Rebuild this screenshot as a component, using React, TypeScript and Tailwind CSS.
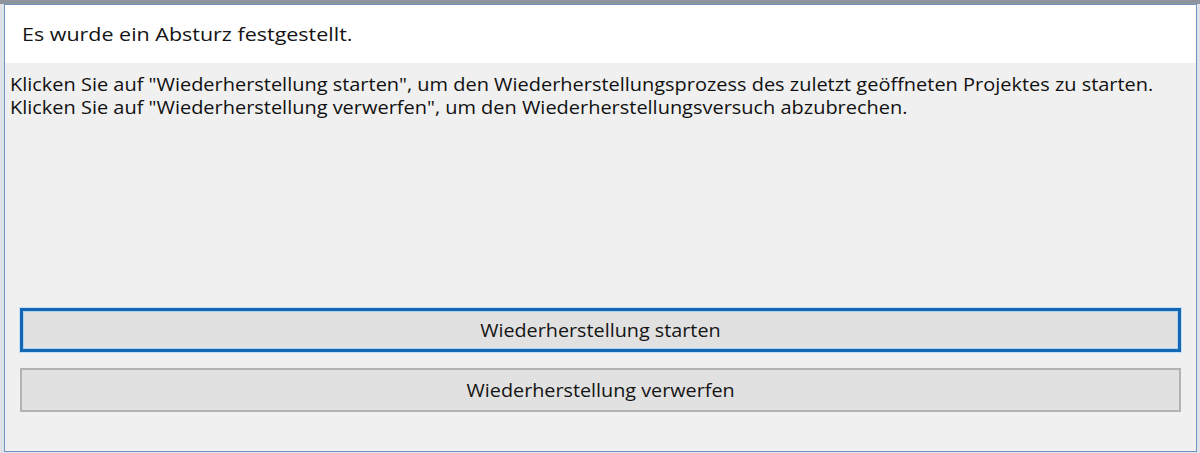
import React from "react";

export default function App() {
  const font = { fontFamily: '"Open Sans", "Noto Sans", sans-serif' };
  return (
    <div className="w-[1200px] h-[453px] bg-[#dfe3e8] flex flex-col overflow-hidden" style={font}>
      <div className="h-[4px] bg-[#8e949c] shrink-0" />
      <div className="flex-1 flex pl-[4px] pr-[3px] pb-[1px] bg-[#dfe3e8]">
        <div className="flex-1 flex flex-col border border-[#6f93c2] bg-[#f0f0f0]">
          <div className="h-[58px] bg-white flex items-center pl-[17px] pt-[1px] shrink-0">
            <span className="inline-block origin-left scale-x-[1.13] text-[19px] text-[#141414] whitespace-nowrap">
              Es wurde ein Absturz festgestellt.
            </span>
          </div>
          <div className="flex-1 flex flex-col">
            <div className="pl-[5px] pt-[10px] text-[17.5px] leading-[23px] text-[#101010] whitespace-nowrap">
              <div className="origin-left scale-x-[1.14]">
                Klicken Sie auf "Wiederherstellung starten", um den Wiederherstellungsprozess des zuletzt geöffneten Projektes zu starten.
              </div>
              <div className="origin-left scale-x-[1.14]">
                Klicken Sie auf "Wiederherstellung verwerfen", um den Wiederherstellungsversuch abzubrechen.
              </div>
            </div>
            <div className="flex-1" />
            <div className="flex flex-col gap-[16px] pl-[15px] pr-[15px] pb-[39px]">
              <div className="h-[44px] flex items-center justify-center bg-[#e1e1e1] border-[3px] border-[#1466b0] shadow-[inset_0_0_0_1px_#a9d2f3,0_0_0_1px_#bfe0f8] text-[17.5px] text-[#141414]">
                <span className="inline-block scale-x-[1.13] whitespace-nowrap">Wiederherstellung starten</span>
              </div>
              <div className="h-[44px] flex items-center justify-center bg-[#e1e1e1] border-2 border-[#b3b3b3] text-[17.5px] text-[#141414]">
                <span className="inline-block scale-x-[1.13] whitespace-nowrap">Wiederherstellung verwerfen</span>
              </div>
            </div>
          </div>
        </div>
      </div>
    </div>
  );
}
